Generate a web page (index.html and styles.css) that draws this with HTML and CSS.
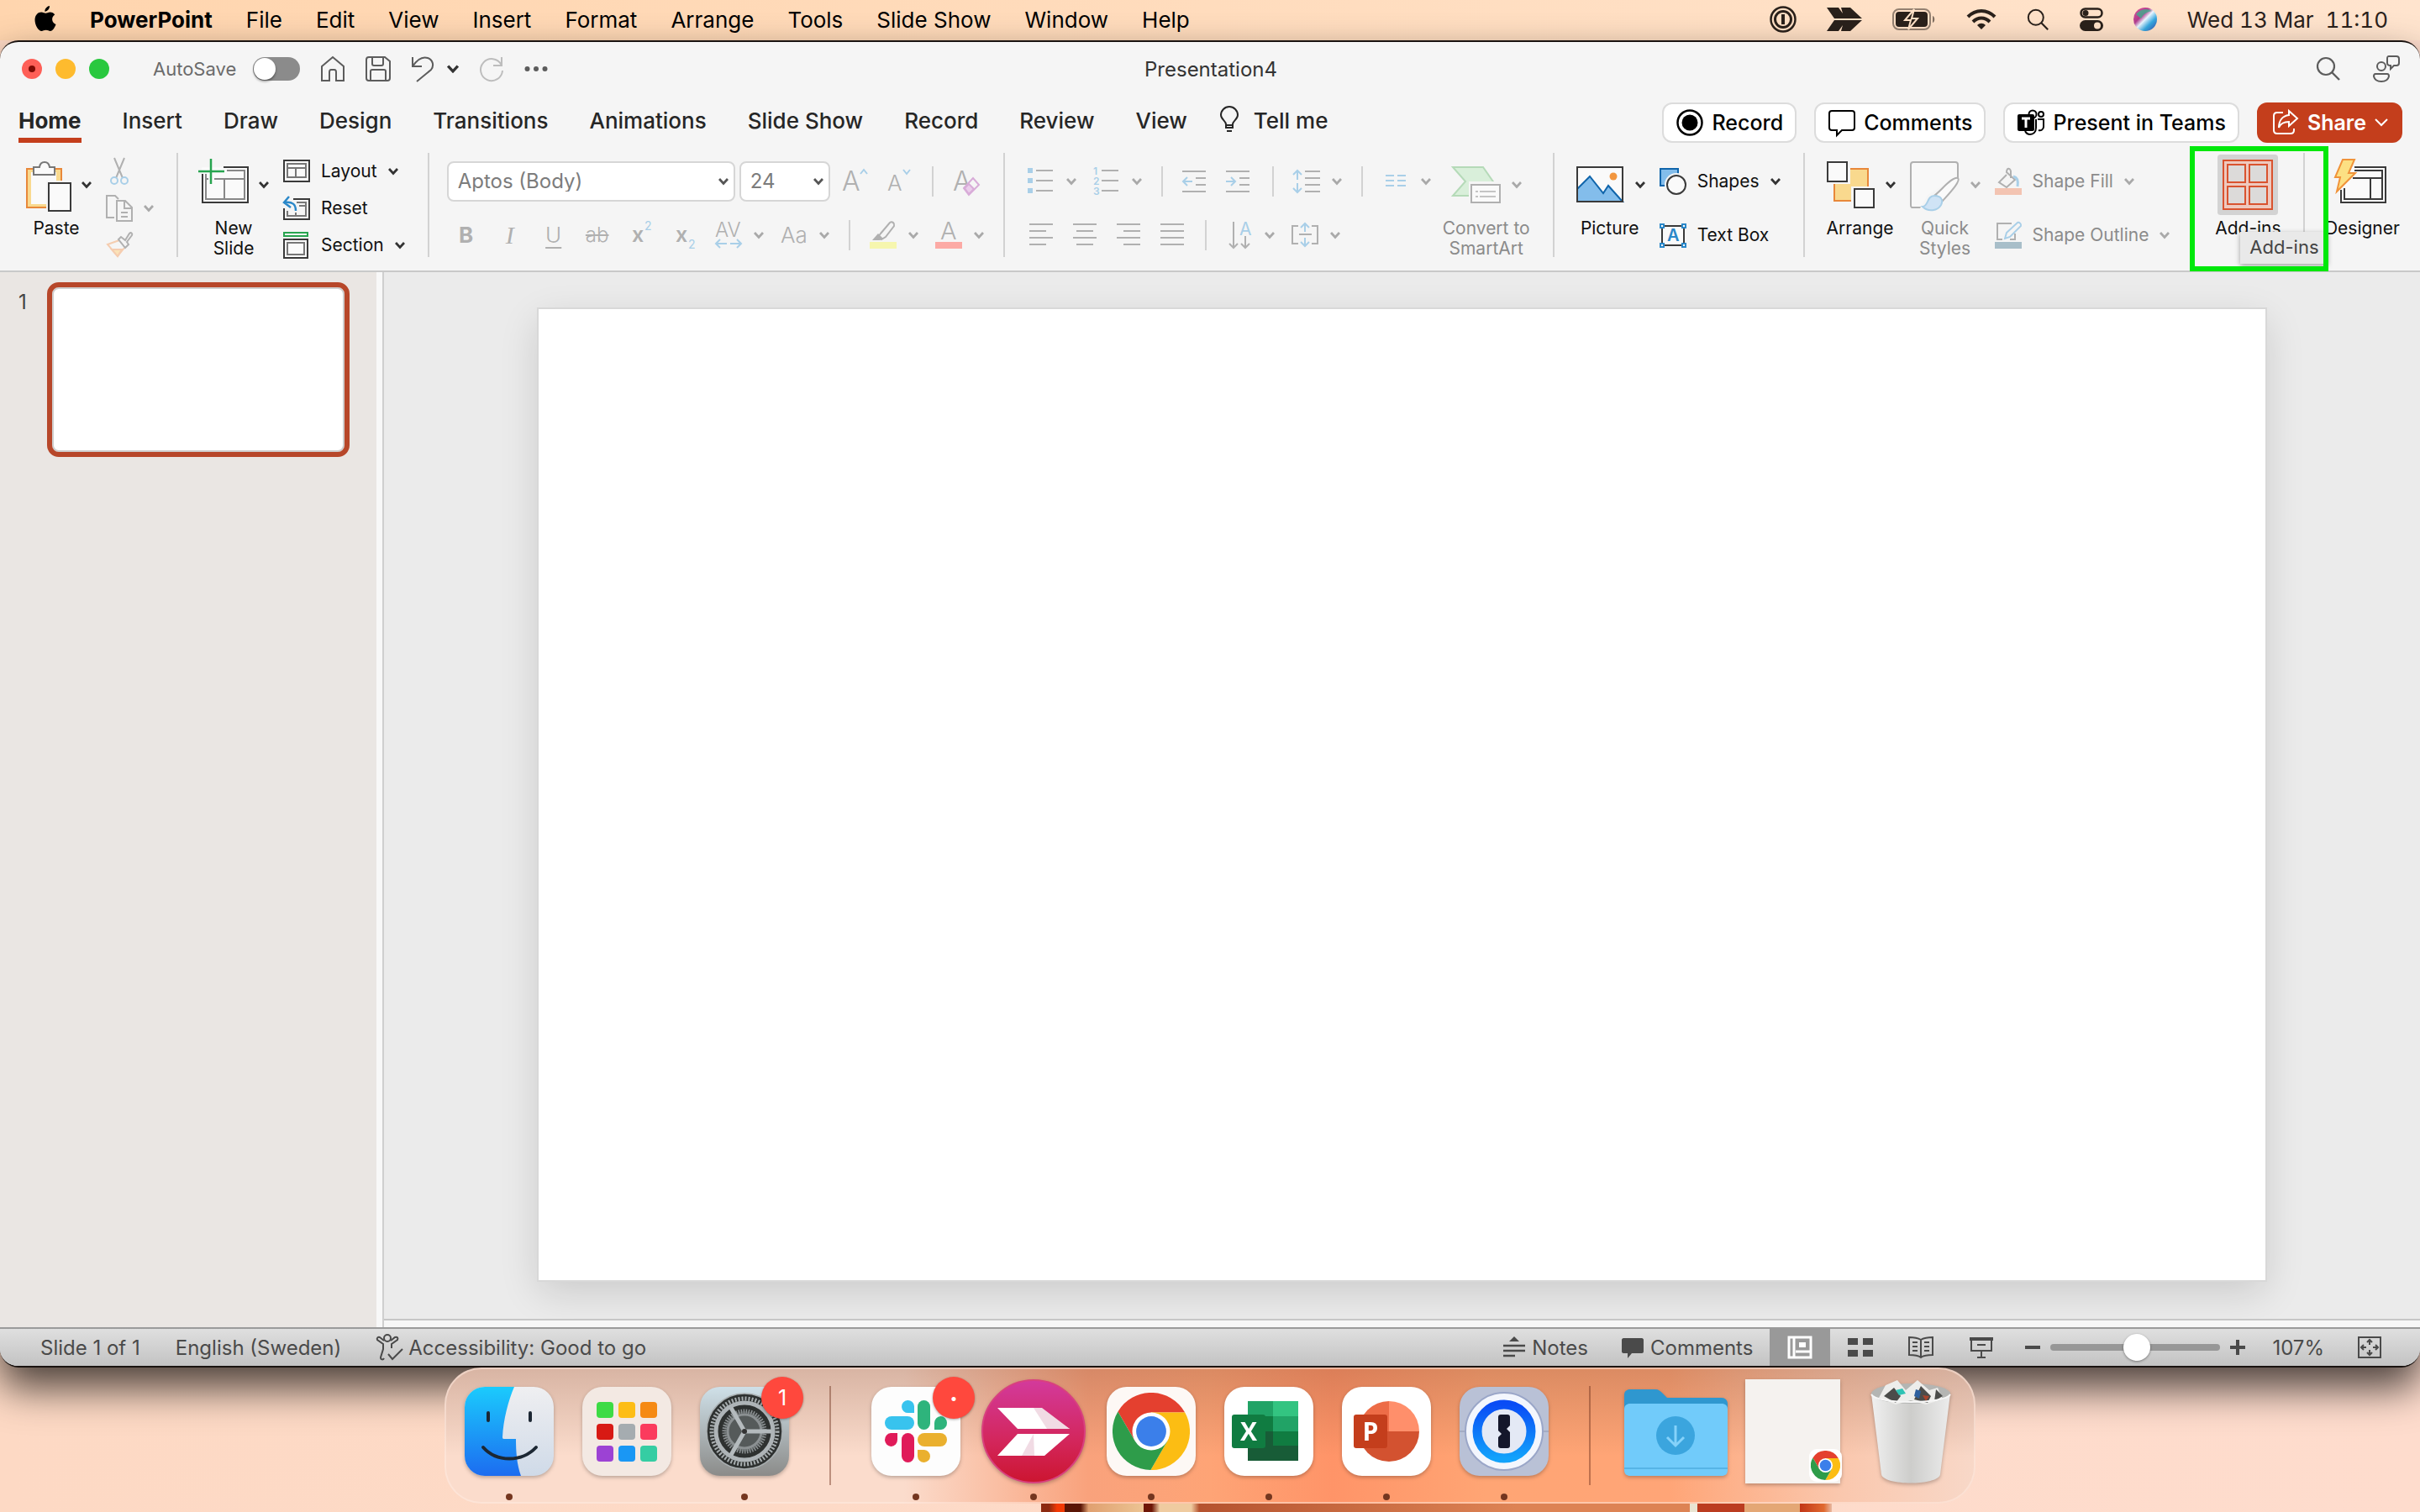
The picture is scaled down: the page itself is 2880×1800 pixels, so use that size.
FILE: index.html
```
<!DOCTYPE html>
<html lang="en">
<head>
    <meta charset="UTF-8">
    <meta name="viewport" content="width=device-width, initial-scale=1.0">
    <title>Presentation4</title>
    <link rel="stylesheet" href="styles.css">
</head>
<body>
    <svg class="sprite" aria-hidden="true">
        <symbol id="chev" viewBox="0 0 12 12"><path d="M1 3l5 5.500 5-5.500" fill="none" stroke="currentColor" stroke-width="2.800"/></symbol>
        <symbol id="search" viewBox="0 0 30 30"><circle cx="12" cy="12" r="10" fill="none" stroke="currentColor" stroke-width="2.200"/><path d="M19 19l9 9" stroke="currentColor" stroke-width="2.400" fill="none"/></symbol>
        <symbol id="chrome" viewBox="-45 -45 90 90">
            <path d="M-38.700-23A45 45 0 0 1 39.300-22H0L-19 11z" fill="#e4402f"/>
            <path d="M39.300-22A45 45 0 0 1-.6 45L19 11 0-22z" fill="#fcbd13"/>
            <path d="M-.6 45A45 45 0 0 1-38.700-23L-19 11H19z" fill="#2e9c4a"/>
            <circle r="22" fill="#fff"/><circle r="17.500" fill="#3b7fea"/>
        </symbol>
    </svg>

    <header class="menubar">
        <nav class="menus">
            <svg class="apple" width="26" height="32" viewBox="0 0 26 32"><path d="M18 0c.3 3-2.300 6.600-5.600 6.700C12 3.600 15 .6 18 0zM13.400 8.800c1.200 0 3-1.400 5.400-1.300 2.300.1 4.300 1.200 5.400 3-4.600 2.900-3.900 9.400 1.300 11.500-1 3-3.600 8-6.600 8-1.900 0-2.800-1.200-5.200-1.200S10.200 30 8.500 30C4.800 30 .5 23 .5 16.800c0-6 3.800-9.300 7.600-9.300 2.400 0 4.100 1.300 5.300 1.300z"/></svg>
            <a href="#" class="app-name">PowerPoint</a>
            <a href="#">File</a>
            <a href="#">Edit</a>
            <a href="#">View</a>
            <a href="#">Insert</a>
            <a href="#">Format</a>
            <a href="#">Arrange</a>
            <a href="#">Tools</a>
            <a href="#">Slide Show</a>
            <a href="#">Window</a>
            <a href="#">Help</a>
        </nav>
        <div class="tray">
            <svg width="32" height="32" viewBox="0 0 32 32" fill="none" stroke="currentColor"><circle cx="16" cy="16" r="14.500" stroke-width="2.500"/><circle cx="16" cy="16" r="9.500" stroke-width="3"/><path d="M16 10v12" stroke-width="4"/></svg>
            <svg width="42" height="28" viewBox="0 0 42 28"><path d="M0 0h14l5 7-2-7h11l14 13H9zM9 15h33L28 28H17l2-7-5 7H0z"/></svg>
            <svg width="52" height="26" viewBox="0 0 52 26"><rect x="1" y="1" width="44" height="24" rx="7" fill="none" stroke="currentColor" stroke-width="2" opacity=".5"/><rect x="4" y="4" width="38" height="18" rx="4"/><path d="M48 9c3 1 3 7 0 8z" opacity=".6"/><path d="M26 1L15 14h7l-3 11 11-13h-7z" stroke="#ffe2c8" stroke-width="2"/></svg>
            <svg width="36" height="26" viewBox="0 0 36 26" fill="none" stroke="currentColor" stroke-width="4"><path d="M2 10c9-9.500 23-9.500 32 0M8 16c6-6 14-6 20 0"/><path d="M18 25l-5-5c3-3 7-3 10 0z" fill="currentColor" stroke="none"/></svg>
            <svg width="27" height="27"><use href="#search"/></svg>
            <svg width="28" height="28" viewBox="0 0 28 28"><rect x="1.500" y="1.500" width="25" height="10" rx="5" fill="none" stroke="currentColor" stroke-width="2.500"/><circle cx="7" cy="6.500" r="3.500"/><rect y="15" width="28" height="13" rx="6.500"/><circle cx="21" cy="21.500" r="4" fill="#ffe2c8"/></svg>
            <svg width="28" height="28" viewBox="0 0 28 28"><defs><linearGradient id="siri" x2="1" y2="1"><stop stop-color="#e05a9a"/><stop offset=".35" stop-color="#b23b8e"/><stop offset=".5" stop-color="#e9f6ff"/><stop offset=".7" stop-color="#35a8e0"/><stop offset="1" stop-color="#3a45a8"/></linearGradient></defs><circle cx="14" cy="14" r="14" fill="url(#siri)"/><path d="M3 8c5-6 12-8 19-4-5 1-10 3-13 9z" fill="#3fae8d" opacity=".8"/></svg>
            <time>Wed 13 Mar&nbsp; 11:10</time>
        </div>
    </header>

    <main class="window">
        <div class="titlebar">
            <div class="quick">
                <div class="lights">
                    <button class="light close" aria-label="Close"></button>
                    <button class="light min" aria-label="Minimize"></button>
                    <button class="light max" aria-label="Zoom"></button>
                </div>
                <label class="autosave">AutoSave <input type="checkbox" class="toggle"></label>
                <button aria-label="Home"><svg width="30" height="32" viewBox="0 0 30 32" class="line"><path d="M2 13L15 2l13 11v17h-9V20c0-2-1-3-2-3h-4c-1 0-2 1-2 3v10H2z"/></svg></button>
                <button aria-label="Save"><svg width="30" height="30" viewBox="0 0 30 30" class="line"><path d="M4 1h19l6 5v20c0 2-1 3-3 3H4c-2 0-3-1-3-3V4c0-2 1-3 3-3zM8 1v8c0 1 1 2 2 2h9c1 0 2-1 2-2V1M6 29V18c0-1 1-2 2-2h14c1 0 2 1 2 2v11"/></svg></button>
                <button class="undo" aria-label="Undo"><svg width="28" height="32" viewBox="0 0 28 32" class="line"><path d="M2 2v11h11M2 13C8 4 14 1 20 3c6 2 8 9 4 14L7 31"/></svg><svg width="14" height="14" class="dark"><use href="#chev"/></svg></button>
                <button class="faded" aria-label="Redo"><svg width="30" height="30" viewBox="0 0 30 30" class="line"><path d="M27 1v10H17M26.500 10A13 13 0 1 0 28 17"/></svg></button>
                <button aria-label="More"><svg width="28" height="8" viewBox="0 0 28 8"><circle cx="3.500" cy="4" r="3"/><circle cx="14" cy="4" r="3"/><circle cx="24.500" cy="4" r="3"/></svg></button>
            </div>
            <h1>Presentation4</h1>
            <div class="corner">
                <button aria-label="Search"><svg width="30" height="30"><use href="#search"/></svg></button>
                <button aria-label="Account"><svg width="32" height="32" viewBox="0 0 32 32" class="line"><circle cx="10" cy="13" r="5"/><path d="M3 22h14c2 0 2 2 2 3-1 4-5 6-9 6s-8-2-9-6c0-1 0-3 2-3zM19 1h9c2 0 3 1 3 3v5c0 2-1 3-3 3h-3l-4 4v-4c-3 0-4-1-4-3V4c0-2 0-3 2-3z"/></svg></button>
            </div>
        </div>

        <div class="tabrow">
            <nav class="tabs">
                <button class="tab active">Home</button>
                <button class="tab">Insert</button>
                <button class="tab">Draw</button>
                <button class="tab">Design</button>
                <button class="tab">Transitions</button>
                <button class="tab">Animations</button>
                <button class="tab">Slide Show</button>
                <button class="tab">Record</button>
                <button class="tab">Review</button>
                <button class="tab">View</button>
                <button class="tab tell"><svg width="22" height="32" viewBox="0 0 22 32" class="line"><path d="M7 21c0-4-6-6-6-11a10 10 0 0 1 20 0c0 5-6 7-6 11v4H7zM7 22h8M8 29h6"/></svg>Tell me</button>
            </nav>
            <div class="actions">
                <button class="pill"><svg width="32" height="32" viewBox="0 0 32 32"><circle cx="16" cy="16" r="14.500" fill="none" stroke="currentColor" stroke-width="2.500"/><circle cx="16" cy="16" r="9.500"/></svg>Record</button>
                <button class="pill"><svg width="32" height="32" viewBox="0 0 32 32" class="line"><path d="M4 2h24c2 0 3 1 3 3v17c0 2-1 3-3 3H16l-6 6v-6H4c-2 0-3-1-3-3V5c0-2 1-3 3-3z"/></svg>Comments</button>
                <button class="pill"><svg width="32" height="32" viewBox="0 0 32 32"><g class="line"><circle cx="18" cy="6" r="4.500"/><circle cx="28" cy="6" r="3"/><path d="M24 12h7v9c0 3-3 5-6 4M22 12v10c0 5-3 8-7 8s-5-2-6-4"/></g><rect y="6" width="20" height="20" rx="2"/><path d="M5 11h10M10 11v11" stroke="#fff" stroke-width="3"/></svg>Present in Teams</button>
                <button class="pill share"><svg width="32" height="32" viewBox="0 0 32 32" class="line"><path d="M13 4H6C3 4 2 6 2 8v17c0 3 1 4 4 4h16c3 0 4-1 4-4v-2M20 2l10 9-10 9v-5c-6 0-10 2-12 7 0-8 4-14 12-15z"/></svg>Share <svg width="16" height="16" viewBox="0 0 16 16" class="line"><path d="M1 4l7 7 7-7"/></svg></button>
            </div>
        </div>

        <div class="ribbon">
            <div class="group">
                <button class="big">
                    <span class="face"><svg width="60" height="64" viewBox="0 0 60 64"><path d="M6 13h42v45H6z" fill="#f9d98e"/><path d="M12 17h30v38H12z" fill="#fafafa"/><path d="M48 28V13H7v46h24" fill="none" stroke="#e8883a" stroke-width="2"/><path d="M15 20v-9h7c1-8 11-8 12 0h6v9z" fill="#fafafa" stroke="#777" stroke-width="2"/><path d="M30 27h32v36H30z" fill="#f5f5f5"/><path d="M33 30h26v33H33z" fill="#fafafa" stroke="#3a3a3a" stroke-width="2"/></svg><svg class="chev"><use href="#chev"/></svg></span>
                    <span>Paste</span>
                </button>
                <div class="stack">
                    <button class="small off" aria-label="Cut"><svg width="32" height="32" viewBox="0 0 32 32" fill="none" stroke-width="2"><path d="M10 0l10 24M22 0L12 24" stroke="#b0b0b0"/><g stroke="#a9cfe8"><circle cx="10" cy="27" r="4"/><circle cx="22" cy="27" r="4"/></g></svg></button>
                    <button class="small off" aria-label="Copy"><svg width="32" height="32" viewBox="0 0 32 32" fill="none" stroke="#b0b0b0" stroke-width="2"><path d="M10 27H1V1h10l4 4M13 7h10l8 8v16H13zM22 7v9h9M18 21h8M18 26h8"/></svg><svg class="chev"><use href="#chev"/></svg></button>
                    <button class="small off" aria-label="Format Painter"><svg width="32" height="32" viewBox="0 0 32 32" fill="none" stroke-width="2"><path d="M16 10L2 15l12 14 8-10" stroke="#f5cdb0"/><path d="M7 21l7 8 5-8z" fill="#fbe3b8" stroke="#f5cdb0"/><path d="M15 9l3-3 5 4 5-8c2-2 4 0 3 2l-6 8 2 3-4 4z" stroke="#b0b0b0"/></svg></button>
                </div>
            </div>
            <span class="divider"></span>
            <div class="group">
                <button class="big">
                    <span class="face"><svg width="60" height="64" viewBox="0 0 60 64" fill="none" stroke-width="2"><path d="M4 11h54v42H5z" fill="#fafafa"/><path d="M30 11h29v42H5V19" stroke="#3a3a3a"/><path d="M34 15h21v34H9V19M19 25h36M9 25h3M31 25v24" stroke="#888"/><path d="M15 1v30M0 16h31" stroke="#27a44f" stroke-width="2.500"/></svg><svg class="chev"><use href="#chev"/></svg></span>
                    <span>New<br>Slide</span>
                </button>
                <div class="stack">
                    <button class="small"><svg width="32" height="32" viewBox="0 0 32 32" fill="none" stroke-width="2"><path d="M1 3h30v25H1z" fill="#fafafa" stroke="#3a3a3a"/><path d="M5 7h22v16H5zM5 12h22M15 12v11" stroke="#777"/></svg>Layout <svg class="chev"><use href="#chev"/></svg></button>
                    <button class="small"><svg width="32" height="32" viewBox="0 0 32 32" fill="none" stroke-width="2"><path d="M12 5h19v24H1V16" stroke="#3a3a3a"/><path d="M16 9h11v16H5v-6M19 13h8M15 21v4" stroke="#777"/><path d="M7 2L1 9l8 6M2 9c9-1 13 2 13 10" stroke="#2b88c9" stroke-width="2.500"/></svg>Reset</button>
                    <button class="small"><svg width="32" height="32" viewBox="0 0 32 32" fill="none" stroke-width="2"><path d="M1 1h28v4H1z" stroke="#27a44f"/><path d="M1 9h28v22H1z" fill="#fafafa" stroke="#3a3a3a"/><path d="M5 13h20v14H5z" stroke="#777"/></svg>Section <svg class="chev"><use href="#chev"/></svg></button>
                </div>
            </div>
            <span class="divider"></span>
            <div class="group font">
                <div class="rows">
                    <div class="row">
                        <div class="combos">
                            <span class="combo font-name"><select aria-label="Font"><option>Aptos (Body)</option></select><svg class="chev"><use href="#chev"/></svg></span>
                            <span class="combo font-size"><select aria-label="Font size"><option>24</option></select><svg class="chev"><use href="#chev"/></svg></span>
                        </div>
                        <button class="tool" aria-label="Increase font size"><svg width="32" height="32" viewBox="0 0 32 32"><text x="0" y="27" class="thin" font-size="32">A</text><path d="M22 7l4-5 4 5" class="blue"/></svg></button>
                        <button class="tool" aria-label="Decrease font size"><svg width="32" height="32" viewBox="0 0 32 32"><text x="2" y="27" class="thin" font-size="26">A</text><path d="M21 2l4 5 4-5" class="blue"/></svg></button>
                        <span class="divider short"></span>
                        <button class="tool" aria-label="Clear formatting"><svg width="32" height="32" viewBox="0 0 32 32"><text x="0" y="27" class="thin" font-size="32">A</text><path d="M13 24L24 12l7 8-12 12z" fill="#f5f5f5" stroke="#d8acd8" stroke-width="2"/><path d="M14 24l5-5 6 6-6 6z" fill="#ebcdeb" stroke="#d8acd8" stroke-width="2"/></svg></button>
                    </div>
                    <div class="row tools">
                        <button class="tool"><b>B</b></button>
                        <button class="tool italic"><i>I</i></button>
                        <button class="tool"><u>U</u></button>
                        <button class="tool strike"><s>ab</s></button>
                        <button class="tool" aria-label="Superscript"><svg width="32" height="32" viewBox="0 0 32 32"><text x="5" y="24" font-size="25" font-weight="600">x</text><text x="20" y="10" font-size="14" class="cyan">2</text></svg></button>
                        <button class="tool" aria-label="Subscript"><svg width="32" height="32" viewBox="0 0 32 32"><text x="5" y="24" font-size="25" font-weight="600">x</text><text x="20" y="32" font-size="14" class="cyan">2</text></svg></button>
                        <button class="tool" aria-label="Character spacing"><svg width="32" height="32" viewBox="0 0 32 32"><text x="0" y="18" class="thin" font-size="24">AV</text><path d="M6 21l-5 5 5 5M1 26h13M26 21l5 5-5 5M31 26H18" class="blue"/></svg><svg class="chev"><use href="#chev"/></svg></button>
                        <button class="tool" aria-label="Change case"><svg width="32" height="32" viewBox="0 0 32 32"><text x="0" y="25" font-size="26" font-weight="300">Aa</text></svg><svg class="chev"><use href="#chev"/></svg></button>
                        <span class="divider short"></span>
                        <button class="tool" aria-label="Highlight"><svg width="32" height="32" viewBox="0 0 32 32"><path d="M13 14L24 1c3-2 6 1 5 4L19 18l-5 3-4-3z" fill="none" stroke="#b0b0b0" stroke-width="2"/><path d="M10 14l6 6-4 2H3z"/><path d="M0 24h32v8H0z" fill="#f6f6ae"/></svg><svg class="chev"><use href="#chev"/></svg></button>
                        <button class="tool" aria-label="Font color"><svg width="32" height="32" viewBox="0 0 32 32"><text x="6" y="21" class="thin" font-size="29">A</text><path d="M0 24h32v8H0z" fill="#fcaaa5"/></svg><svg class="chev"><use href="#chev"/></svg></button>
                    </div>
                </div>
            </div>
            <span class="divider"></span>
            <div class="group para">
                <div class="rows">
                    <div class="row">
                        <button class="tool" aria-label="Bullets"><svg width="32" height="32" viewBox="0 0 32 32"><path d="M0 0h6v6H0zM0 12h6v6H0zM0 24h6v6H0z" fill="#a9cfe8"/><path d="M10 3h20M10 15h20M10 27h20" class="gray"/></svg><svg class="chev"><use href="#chev"/></svg></button>
                        <button class="tool" aria-label="Numbering"><svg width="32" height="32" viewBox="0 0 32 32"><g class="cyan" font-size="12" font-weight="600"><text x="0" y="8">1</text><text x="0" y="20">2</text><text x="0" y="32">3</text></g><path d="M10 3h20M10 15h20M10 27h20" class="gray"/></svg><svg class="chev"><use href="#chev"/></svg></button>
                        <span class="divider short"></span>
                        <button class="tool" aria-label="Decrease indent"><svg width="32" height="32" viewBox="0 0 32 32"><path d="M0 4h28M16 12h12M16 20h12M0 28h28" class="gray"/><path d="M12 16H1M6 11l-5 5 5 5" class="blue"/></svg></button>
                        <button class="tool" aria-label="Increase indent"><svg width="32" height="32" viewBox="0 0 32 32"><path d="M0 4h28M16 12h12M16 20h12M0 28h28" class="gray"/><path d="M0 16h11M6 11l5 5-5 5" class="blue"/></svg></button>
                        <span class="divider short"></span>
                        <button class="tool" aria-label="Line spacing"><svg width="32" height="32" viewBox="0 0 32 32"><path d="M14 4h18M14 12h18M14 20h18M14 28h18" class="gray"/><path d="M0 8l5-5 5 5M5 3v11M0 24l5 5 5-5M5 29V18" class="blue"/></svg><svg class="chev"><use href="#chev"/></svg></button>
                        <span class="divider short"></span>
                        <button class="tool" aria-label="Columns"><svg width="32" height="32" viewBox="0 0 32 32"><path d="M4 9h10M4 15h10M4 21h10M18 9h10M18 15h10M18 21h10" class="blue"/></svg><svg class="chev"><use href="#chev"/></svg></button>
                    </div>
                    <div class="row">
                        <button class="tool" aria-label="Align left"><svg width="32" height="32" viewBox="0 0 32 32"><path d="M2 3h28M2 11h20M2 19h28M2 27h20" class="gray"/></svg></button>
                        <button class="tool" aria-label="Center"><svg width="32" height="32" viewBox="0 0 32 32"><path d="M2 3h28M6 11h20M2 19h28M6 27h20" class="gray"/></svg></button>
                        <button class="tool" aria-label="Align right"><svg width="32" height="32" viewBox="0 0 32 32"><path d="M2 3h28M10 11h20M2 19h28M10 27h20" class="gray"/></svg></button>
                        <button class="tool" aria-label="Justify"><svg width="32" height="32" viewBox="0 0 32 32"><path d="M2 3h28M2 11h28M2 19h28M2 27h28" class="gray"/></svg></button>
                        <span class="divider short"></span>
                        <button class="tool" aria-label="Text direction"><svg width="32" height="32" viewBox="0 0 32 32"><path d="M9 0v31M4 26l5 5 5-5M23 17v14M18 26l5 5 5-5" class="gray"/><text x="16" y="16" font-size="21" class="cyan">A</text></svg><svg class="chev"><use href="#chev"/></svg></button>
                        <button class="tool" aria-label="Align text"><svg width="32" height="32" viewBox="0 0 32 32"><path d="M8 5H1v21h7M24 5h7v21h-7M9 15h15" class="gray"/><path d="M11 7l5-5 5 5M16 2v10M11 24l5 5 5-5M16 29V19" class="blue"/></svg><svg class="chev"><use href="#chev"/></svg></button>
                    </div>
                </div>
                <button class="big off">
                    <span class="face"><svg width="60" height="64" viewBox="0 0 60 64" stroke-width="2"><path d="M2 11h36l16 23-15 11H2l15-17z" fill="#d9efda" stroke="#b5dab8"/><path d="M21 28h39v30H21z" fill="#f5f5f5"/><path d="M24 32h34v21H24z" fill="#fafafa" stroke="#b0b0b0"/><path d="M29 40h3M34 40h19M29 46h3M34 46h19" stroke="#c4c4c4"/></svg><svg class="chev"><use href="#chev"/></svg></span>
                    <span>Convert to<br>SmartArt</span>
                </button>
            </div>
            <span class="divider"></span>
            <div class="group">
                <button class="big">
                    <span class="face"><svg width="60" height="64" viewBox="0 0 60 64" stroke-width="2"><path d="M3 11h54v41H3z" fill="#fafafa"/><path d="M3 37l15-15 16 20 6-9 17 19H3z" fill="#83bdeb" stroke="#1065ab"/><circle cx="46" cy="22" r="4.500" fill="#f2963f"/><path d="M3 11h54v41H3z" fill="none" stroke="#3a3a3a"/></svg><svg class="chev"><use href="#chev"/></svg></span>
                    <span>Picture</span>
                </button>
                <div class="rows">
                    <button class="small"><svg width="32" height="32" viewBox="0 0 32 32" stroke-width="2"><path d="M1 1h21v20H1z" fill="#83bdeb" stroke="#1065ab"/><circle cx="20" cy="20" r="14" fill="#f5f5f5"/><circle cx="20" cy="20" r="11" fill="#fafafa" stroke="#3a3a3a"/></svg>Shapes <svg class="chev"><use href="#chev"/></svg></button>
                    <button class="small"><svg width="32" height="32" viewBox="0 0 32 32" stroke-width="2"><path d="M3 5h26v23H3z" fill="#fafafa" stroke="#3a3a3a"/><g fill="#fff" stroke="#2b88c9"><path d="M1 3h4v4H1zM27 3h4v4h-4zM1 26h4v4H1zM27 26h4v4h-4z"/></g><text x="9" y="23" font-size="20" fill="#2b88c9" font-weight="600">A</text></svg>Text Box</button>
                </div>
            </div>
            <span class="divider"></span>
            <div class="group format">
                <button class="big">
                    <span class="face"><svg width="60" height="64" viewBox="0 0 60 64" stroke-width="2"><path d="M11 13h40v38H11z" fill="#f9d98e" stroke="#e8883a"/><path d="M0 3h30v28H0zM31 34h30v30H31z" fill="#f5f5f5"/><path d="M3 5h23v23H3zM35 37h23v22H35z" fill="#fafafa" stroke="#3a3a3a"/></svg><svg class="chev"><use href="#chev"/></svg></span>
                    <span>Arrange</span>
                </button>
                <button class="big off">
                    <span class="face"><svg width="60" height="64" viewBox="0 0 60 64" stroke-width="2"><path d="M4 5h50c2 0 3 1 3 3v50c0 2-1 1-3 1H4c-2 0-3 0-3-3V8c0-2 1-3 3-3z" fill="#f8f8f8" stroke="#b0b0b0"/><path d="M12 60l9-16 33-20h8v40H12z" fill="#f5f5f5"/><path d="M30 44c8-6 20-22 27-20 4 3-9 17-18 27z" fill="#fafafa" stroke="#b0b0b0"/><path d="M15 58c7 0 5-13 14-13 8 0 11 5 8 11-4 7-15 9-22 2z" fill="#cfe3f5" stroke="#a9cfe8"/></svg><svg class="chev"><use href="#chev"/></svg></span>
                    <span>Quick<br>Styles</span>
                </button>
                <div class="rows">
                    <button class="small off"><svg width="32" height="32" viewBox="0 0 32 32" fill="none" stroke-width="2"><path d="M14 8L5 17l9 6 10-9-10-9c0-5 4-6 5-1v8" stroke="#b0b0b0"/><path d="M22 10c5 1 6 6 5 12" stroke="#a9cfe8" stroke-width="3"/><path d="M0 24h32v8H0z" fill="#f3c4b2"/></svg>Shape Fill <svg class="chev"><use href="#chev"/></svg></button>
                    <button class="small off"><svg width="32" height="32" viewBox="0 0 32 32" fill="none" stroke-width="2"><path d="M20 2H3v19h6M24 14v7h-6" stroke="#b0b0b0"/><path d="M12 20l2-7L27 1c2-1 5 2 4 4L18 18z" stroke="#a9cfe8"/><path d="M0 24h32v8H0z" fill="#a8bec9"/></svg>Shape Outline <svg class="chev"><use href="#chev"/></svg></button>
                </div>
            </div>
            <div class="addins">
                <button class="big">
                    <span class="face tile"><svg width="60" height="60" viewBox="0 0 60 60" fill="none" stroke="#d9532f" stroke-width="2"><path d="M1 1h58v58H1z" fill="#efc9be"/><path d="M6 6h21v21H6zM32 6h21v21H32zM6 32h21v21H6zM32 32h21v21H32z" fill="#dcdad9"/></svg></span>
                    <span>Add-ins</span>
                </button>
                <span class="divider"></span>
                <span class="tooltip">Add-ins</span>
                <span class="marker"></span>
            </div>
            <button class="big designer">
                <span class="face"><svg width="66" height="64" viewBox="0 0 66 64" fill="none" stroke-width="2"><path d="M15 11h46v42H6V30z" fill="#fafafa"/><path d="M24 11h37v42H8V38" stroke="#3a3a3a"/><path d="M24 15h33v34H12V36M22 24h35M43 24v25" stroke="#3a3a3a"/><path d="M10 2h14l-7 16h8L3 40l4-17H1z" fill="#fce083" stroke="#f0933a"/></svg></span>
                <span>Designer</span>
            </button>
        </div>

        <div class="workspace">
            <aside class="slides">
                <span class="slide-number">1</span>
                <button class="thumb" aria-label="Slide 1"></button>
            </aside>
            <div class="editor">
                <section class="canvas"><div class="slide"></div></section>
                <div class="notes-handle"></div>
            </div>
        </div>

        <footer class="status">
            <div class="info">
                <span>Slide 1 of 1</span>
                <span>English (Sweden)</span>
                <button class="access"><svg width="32" height="32" viewBox="0 0 32 32" class="line"><circle cx="13" cy="5" r="4"/><path d="M9 8L4 4C2 3 0 5 1 7l7 5v6L5 28c0 3 3 3 4 1M17 8l5-4c3-1 4 1 3 3l-7 5v5M14 24l5 6L31 18"/></svg>Accessibility: Good to go</button>
            </div>
            <div class="views">
                <button class="notes"><svg width="26" height="26" viewBox="0 0 26 26"><path d="M13 0l6 6H7z"/><path d="M0 11h26M0 17h26M0 23h14" stroke="currentColor" stroke-width="2.500"/></svg>Notes</button>
                <button class="comments"><svg width="26" height="26" viewBox="0 0 26 26"><path d="M2 2h22c1 0 2 1 2 2v14c0 1-1 2-2 2H12l-5 6v-6H2c-1 0-2-1-2-2V4c0-1 1-2 2-2z"/></svg>Comments</button>
                <button class="view current" aria-label="Normal"><svg width="30" height="28" viewBox="0 0 30 28" fill="none" stroke="#fff" stroke-width="3"><path d="M2 2h26v24H2zM8 2v24M10 19h18"/><path d="M14 8h8v6h-8z" fill="#fff" stroke="none"/></svg></button>
                <button class="view" aria-label="Slide sorter"><svg width="30" height="24" viewBox="0 0 30 24"><path d="M0 1h12v8H0zM18 1h12v8H18zM0 15h12v8H0zM18 15h12v8H18z"/></svg></button>
                <button class="view" aria-label="Reading view"><svg width="30" height="26" viewBox="0 0 30 26" class="line"><path d="M15 4C10 1 6 1 1 1v21c5 0 10 0 14 3 4-3 9-3 14-3V1c-5 0-9 0-14 3zv20M5 7h6M5 12h6M5 17h6M19 7h6M19 12h6M19 17h6"/></svg></button>
                <button class="view" aria-label="Slide show"><svg width="30" height="26" viewBox="0 0 30 26" class="line"><path d="M1 3h28" stroke-width="4"/><path d="M3 4v13h24V4M10 10h10M15 17v8M10 25h10"/></svg></button>
                <div class="zoom">
                    <button aria-label="Zoom out"><svg width="18" height="18" viewBox="0 0 18 18"><path d="M0 7h18v4H0z"/></svg></button>
                    <input type="range" min="0" max="100" value="51" aria-label="Zoom">
                    <button aria-label="Zoom in"><svg width="18" height="18" viewBox="0 0 18 18"><path d="M0 7h7V0h4v7h7v4h-7v7H7v-7H0z"/></svg></button>
                </div>
                <button class="percent">107%</button>
                <button aria-label="Fit slide"><svg width="28" height="28" viewBox="0 0 28 28" class="line"><path d="M1 2h26v24H1zM14 5v6M11 8l3-3 3 3M14 23v-6M11 20l3 3 3-3M4 14h6M7 11l-3 3 3 3M24 14h-6M21 11l3 3-3 3"/></svg></button>
            </div>
        </footer>
    </main>

    <div class="dock-area">
        <div class="dock">
            <button class="app running" aria-label="Finder"><svg width="106" height="106" viewBox="0 0 106 106"><defs><linearGradient id="finder" x2="0" y2="1"><stop stop-color="#1bcbfd"/><stop offset="1" stop-color="#1c6cf0"/></linearGradient><linearGradient id="face" x2="0" y2="1"><stop stop-color="#efeff1"/><stop offset="1" stop-color="#cfdae8"/></linearGradient><clipPath id="tile"><rect width="106" height="106" rx="24"/></clipPath></defs><g clip-path="url(#tile)"><path d="M0 0h106v106H0z" fill="url(#face)"/><path d="M0 0h59c-7 16-13 39-14 60 0 2 1 2 3 2h13c0 15 1 30 6 44H0z" fill="url(#finder)"/></g><path d="M28 31v9M78 31v9M22 72c16 18 46 18 63 0" fill="none" stroke="#1c2733" stroke-width="4" stroke-linecap="round"/></svg></button>
            <button class="app" aria-label="Launchpad"><svg width="106" height="106" viewBox="0 0 106 106"><rect width="106" height="106" rx="24" fill="#f3e9e3"/><rect x="17" y="18" width="20" height="19" rx="4" fill="#3ddb45"/><rect x="43" y="18" width="20" height="19" rx="4" fill="#fdbd16"/><rect x="69" y="18" width="20" height="19" rx="4" fill="#f58a14"/><rect x="17" y="44" width="20" height="19" rx="4" fill="#d81a14"/><rect x="43" y="44" width="20" height="19" rx="4" fill="#a5acb0"/><rect x="69" y="44" width="20" height="19" rx="4" fill="#fb3b5d"/><rect x="17" y="70" width="20" height="19" rx="4" fill="#9c42d4"/><rect x="43" y="70" width="20" height="19" rx="4" fill="#1a97f4"/><rect x="69" y="70" width="20" height="19" rx="4" fill="#35cda3"/></svg></button>
            <button class="app running" aria-label="System Settings"><svg width="106" height="106" viewBox="0 0 106 106" fill="none"><defs><linearGradient id="metal" x2="0" y2="1"><stop stop-color="#cfe0e8"/><stop offset="1" stop-color="#8b8b89"/></linearGradient></defs><rect width="106" height="106" rx="24" fill="url(#metal)"/><circle cx="53" cy="53" r="45" fill="#2e3130" stroke="#a9afb1" stroke-width="1.500"/><circle cx="53" cy="53" r="39" stroke="#a7adaf" stroke-width="5" stroke-dasharray="2 2"/><circle cx="53" cy="53" r="34" stroke="#aeb4b7" stroke-width="5"/><circle cx="53" cy="53" r="24" fill="#555a5a" stroke="#8b9092" stroke-width="5" stroke-dasharray="1.500 1.500"/><circle cx="53" cy="53" r="20" stroke="#8b9092" stroke-width="3"/><path d="M53 53h32M53 53L37 25M53 53L37 81" stroke="#b4babd" stroke-width="5"/><circle cx="53" cy="53" r="3" fill="#333"/></svg><span class="badge">1</span></button>
            <span class="dock-divider"></span>
            <button class="app running" aria-label="Slack"><svg width="106" height="106" viewBox="0 0 106 106"><rect width="106" height="106" rx="24" fill="#fdfdfd"/><g fill="#38c3ee"><path d="M51 31h-7a7.500 7.500 0 1 1 7-8z"/><rect x="16" y="35" width="35" height="16" rx="8"/></g><g fill="#2eb47c"><rect x="55" y="16" width="15" height="35" rx="7.500"/><path d="M75 51v-8a7.500 8 0 1 1 8 8z"/></g><g fill="#e01b59"><path d="M31 55v8a7.500 8 0 1 1-8-8z"/><rect x="36" y="55" width="15" height="35" rx="7.500"/></g><g fill="#eab02e"><rect x="55" y="55" width="35" height="16" rx="8"/><path d="M55 75h8a7.500 7.500 0 1 1-8 8z"/></g></svg><span class="badge dot">•</span></button>
            <button class="app running" aria-label="Skitch"><svg width="124" height="124" viewBox="0 0 124 124"><defs><linearGradient id="pink" x2="0" y2="1"><stop stop-color="#d33a9c"/><stop offset=".6" stop-color="#d3265b"/><stop offset="1" stop-color="#cc1530"/></linearGradient></defs><circle cx="62" cy="62" r="61" fill="url(#pink)" stroke="#d9407f" stroke-width="2"/><path d="M19 34h44l42 25H43zM43 65h62L75 91H19z" fill="#fff"/><path d="M62 34h10l33 25H78zM62 65l-14 26h15z" fill="#f1dbe4"/></svg></button>
            <button class="app running" aria-label="Chrome"><svg width="106" height="106" viewBox="0 0 106 106"><rect width="106" height="106" rx="24" fill="#fdf8f5"/><use href="#chrome" x="7" y="7" width="92" height="92"/></svg></button>
            <button class="app running" aria-label="Excel"><svg width="106" height="106" viewBox="0 0 106 106"><rect width="106" height="106" rx="24" fill="#fff"/><path d="M28 17h30v18H28z" fill="#21a366"/><path d="M58 17h30v18H58z" fill="#33c481"/><path d="M28 35h30v18H28z" fill="#107c41"/><path d="M58 35h30v18H58z" fill="#21a366"/><path d="M28 53h60v35H28z" fill="#185c37"/><path d="M58 53h30v17H58z" fill="#107c41"/><rect x="9" y="33" width="40" height="40" rx="3" fill="#107c41"/><text x="29" y="64" text-anchor="middle" font-size="30" font-weight="700" fill="#fff">X</text></svg></button>
            <button class="app running" aria-label="PowerPoint"><svg width="106" height="106" viewBox="0 0 106 106"><rect width="106" height="106" rx="24" fill="#fff"/><path d="M56 17a36 36 0 0 0-36 36h36z" fill="#ed6c47"/><path d="M56 17a36 36 0 0 1 36 36H56z" fill="#ff8f6b"/><path d="M20 53a36 36 0 0 0 72 0z" fill="#d35230"/><rect x="14" y="33" width="40" height="40" rx="3" fill="#c43e1c"/><text x="34" y="64" text-anchor="middle" font-size="30" font-weight="700" fill="#fff">P</text></svg></button>
            <button class="app running" aria-label="1Password"><svg width="106" height="106" viewBox="0 0 106 106"><defs><linearGradient id="ring" x2="0" y2="1"><stop stop-color="#0a4cf5"/><stop offset="1" stop-color="#12a2fb"/></linearGradient></defs><rect width="106" height="106" rx="24" fill="#b9c1d6"/><path d="M0 53h106" stroke="#8f97b0"/><circle cx="53" cy="53" r="46" fill="#f3f6fd" stroke="#9aa6c8" stroke-width="2"/><circle cx="53" cy="53" r="32" fill="#e4e9f5" stroke="url(#ring)" stroke-width="11"/><path d="M49 33h8c2 0 3 1 3 3v10l-4 4 4 4v16c0 2-1 3-3 3h-8c-2 0-3-1-3-3V60l4-4-4-4V36c0-2 1-3 3-3z" fill="#14172b"/></svg></button>
            <span class="dock-divider"></span>
            <button class="app" aria-label="Downloads"><svg width="124" height="124" viewBox="0 0 124 124"><path d="M1 19c0-5 3-7 7-7h30c4 0 6 2 9 5l5 5h65c4 0 7 3 7 7v30H1z" fill="#2f97cf"/><path d="M1 36c0-5 3-7 7-7h109c4 0 7 2 7 7v72c0 5-3 7-7 7H8c-4 0-7-2-7-7z" fill="#71cbfa"/><path d="M1 106h123" stroke="#56b4e6" stroke-width="2"/><circle cx="62" cy="67" r="23" fill="#3ba5de"/><path d="M62 55v23M52 69l10 10 10-10" fill="none" stroke="#85d2fa" stroke-width="3"/></svg></button>
            <button class="app" aria-label="Minimized window"><svg width="124" height="124" viewBox="0 0 124 124"><path d="M5 0h113v124H5z" fill="#f5f2ef"/><rect x="81" y="83" width="39" height="39" rx="9" fill="#fff"/><use href="#chrome" x="83" y="85" width="35" height="35"/></svg></button>
            <button class="app" aria-label="Trash"><svg width="124" height="124" viewBox="0 0 124 124"><defs><linearGradient id="bin"><stop stop-color="#f0f0f0"/><stop offset=".5" stop-color="#cdcdcb"/><stop offset="1" stop-color="#ececec"/></linearGradient></defs><path d="M15 17h94l-12 96c-2 14-68 14-70 0z" fill="url(#bin)"/><ellipse cx="62" cy="17" rx="47" ry="12" fill="#b4b5b3"/><path d="M24 22l8-15 14-6 10 12 14-12 14 12 10-3 6 14-20 6-18-5-18 5z" fill="#ededeb"/><path d="M30 20l12-10 8 10-6 8zM66 24l8-16 12 12-4 8zM92 12l8 8-10 6z" fill="#4b4c4a"/><path d="M44 13l8-2 4 6-8 2z" fill="#2fc3b4"/><path d="M68 12l6 2-2 9-6-3z" fill="#2d5f9e"/><path d="M76 19l8 1-4 6z" fill="#a8442c"/><path d="M15 18c6 12 88 12 94 0" fill="none" stroke="#f6f6f6" stroke-width="2"/></svg></button>
        </div>
    </div>
</body>
</html>
```
FILE: styles.css
```
* {
    box-sizing: border-box;
}
body {
    display: flex;
    flex-direction: column;
    height: 100vh;
    margin: 0;
    overflow: hidden;
    background: linear-gradient(to right, #fdd9c4, #fedccd);
    font-family: Inter, "Liberation Sans", sans-serif;
    color: #222;
}
button {
    display: flex;
    align-items: center;
    padding: 0;
    border: none;
    background: none;
    font: inherit;
    color: inherit;
    white-space: nowrap;
}
svg {
    display: block;
    flex: none;
    overflow: visible;
}
svg:not([fill]) {
    fill: currentColor;
}
.sprite {
    position: absolute;
    width: 0;
    height: 0;
}
svg.line,
.line {
    fill: none;
    stroke: currentColor;
    stroke-width: 2;
}
.chev {
    width: 12px;
    height: 12px;
}

/* menu bar */
.menubar {
    display: flex;
    justify-content: space-between;
    align-items: center;
    height: 48px;
    padding: 0 38px 2px 41px;
    background: linear-gradient(to right, #ffd5ae, #ffdcbd 50%, #ffe4ce);
    font-size: 26px;
    color: #000;
}
.menus {
    display: flex;
    align-items: center;
    gap: 40px;
}
.menus a {
    color: inherit;
    text-decoration: none;
}
.menus .app-name {
    font-weight: 700;
}
.tray {
    display: flex;
    align-items: center;
    gap: 36px;
    color: #2a211b;
}
.tray time {
    font-variant-numeric: tabular-nums;
}

/* window */
.window {
    display: flex;
    flex-direction: column;
    flex: 1;
    min-height: 0;
    border-top: 2px solid #1a1310;
    border-bottom: 2px solid #1a1310;
    border-radius: 22px;
    overflow: hidden;
    background: #f5f5f5;
    box-shadow: 0 24px 48px rgba(0, 0, 0, 0.7);
}
.titlebar {
    display: grid;
    grid-template-columns: 1fr auto 1fr;
    align-items: center;
    height: 64px;
    padding: 0 24px 0 26px;
    color: #5c5c5c;
}
.titlebar h1 {
    margin: 0;
    font-size: 24px;
    font-weight: 400;
    color: #333;
}
.quick {
    display: flex;
    align-items: center;
    gap: 24px;
}
.lights {
    display: flex;
    gap: 16px;
    margin-right: 28px;
}
.light {
    justify-content: center;
    width: 24px;
    height: 24px;
    border-radius: 50%;
    background: #febb2e;
}
.light.close {
    background: #fe5f57;
}
.light.close::after {
    content: "";
    width: 8px;
    height: 8px;
    border-radius: 50%;
    background: #7d0b05;
}
.light.max {
    background: #29c83f;
}
.autosave {
    display: flex;
    align-items: center;
    gap: 20px;
    font-size: 22px;
    color: #6b6b6b;
}
.toggle {
    appearance: none;
    width: 56px;
    height: 28px;
    margin: 0;
    border-radius: 14px;
    background: #8b8b8b;
}
.toggle::before {
    content: "";
    display: block;
    width: 26px;
    height: 26px;
    margin: 1px;
    border-radius: 50%;
    background: #fff;
    box-shadow: 0 2px 3px rgba(0, 0, 0, 0.4);
}
.undo {
    gap: 15px;
}
.dark {
    color: #333;
}
.faded {
    color: #bdbdbd;
}
.corner {
    display: flex;
    justify-content: flex-end;
    gap: 38px;
}

/* tabs */
.tabrow {
    display: flex;
    justify-content: space-between;
    align-items: center;
    height: 64px;
    padding: 0 21px 0 22px;
}
.tabs {
    display: flex;
    gap: 49px;
}
.tab {
    height: 48px;
    border-bottom: 6px solid transparent;
    font-size: 26px;
    font-weight: 500;
    color: #262626;
}
.tab.active {
    font-weight: 700;
    border-image: linear-gradient(#c43e1c, #c43e1c) 1;
}
.tell {
    gap: 18px;
    margin-left: -10px;
}
.actions {
    display: flex;
    gap: 21px;
}
.pill {
    gap: 10px;
    height: 48px;
    padding: 0 14px 0 15px;
    border: 2px solid #dcdcdc;
    border-radius: 12px;
    background: #fff;
    font-size: 25px;
    font-weight: 500;
    color: #000;
}
.share {
    padding: 0 15px 0 16px;
    border-color: #c43e1c;
    background: #c43e1c;
    font-weight: 600;
    color: #fff;
}

/* ribbon */
.ribbon {
    display: flex;
    height: 146px;
    padding: 4px 0 0 1px;
    border-bottom: 2px solid #c9c9c9;
    font-size: 21px;
    line-height: 24px;
    color: #111;
}
.group {
    display: flex;
    flex: none;
    gap: 17px;
    padding: 0 27px 0 24px;
}
.font {
    padding-right: 23px;
}
.para {
    gap: 24px;
    padding-right: 37px;
    padding-left: 27px;
}
.format {
    padding-right: 0;
}
.divider {
    flex: none;
    width: 2px;
    height: 124px;
    background: #d2d2d2;
}
.divider.short {
    height: 36px;
    margin: 0 3px;
}
.big {
    flex: none;
    flex-direction: column;
    gap: 8px;
    width: 84px;
    height: 124px;
    padding-top: 6px;
}
.face {
    display: flex;
    flex: none;
    align-items: center;
    gap: 12px;
    height: 64px;
}
.chev {
    color: #333;
}
.off {
    color: #8b8b8b;
}
.off .chev,
.tool .chev {
    color: #a9a9a9;
}
.stack {
    display: flex;
    flex-direction: column;
}
.small {
    gap: 13px;
    height: 44px;
}
.rows {
    display: flex;
    flex-direction: column;
    gap: 16px;
    padding-top: 10px;
}
.rows .small,
.row {
    height: 48px;
}
.row {
    display: flex;
    align-items: center;
    gap: 20px;
}
.tools {
    padding-left: 4px;
}
.combos {
    display: flex;
    gap: 5px;
    margin: 0 -6px 0 -3px;
}
.combo {
    position: relative;
}
.combo select {
    appearance: none;
    width: 100%;
    height: 48px;
    padding: 0 11px;
    border: 2px solid #d6d6d6;
    border-radius: 8px;
    background: #fff;
    font: inherit;
    font-size: 24px;
    color: #7c7c7c;
    opacity: 1;
}
.combo .chev {
    position: absolute;
    top: 18px;
    right: 8px;
    color: #555;
}
.font-name {
    width: 343px;
}
.font-size {
    width: 108px;
}
.tool {
    gap: 14px;
    justify-content: center;
    min-width: 32px;
    height: 36px;
    font-size: 26px;
    color: #b0b0b0;
}
.tool text {
    font-family: Inter, "Liberation Sans", sans-serif;
}
.tool u {
    font-weight: 300;
    text-underline-offset: 5px;
}
.italic {
    font-family: "Liberation Serif", serif;
    font-size: 30px;
}
.strike {
    font-size: 24px;
    font-weight: 300;
}
.thin {
    font-weight: 300;
}
.cyan {
    fill: #a9cfe8;
}
.blue {
    fill: none;
    stroke: #a9cfe8;
    stroke-width: 2;
}
.gray {
    fill: none;
    stroke: #b0b0b0;
    stroke-width: 2;
}
.addins {
    position: relative;
    z-index: 1;
    display: flex;
    flex: none;
    gap: 24px;
    margin-left: 51px;
}
.tile svg {
    border-radius: 1px;
    box-shadow: 0 0 0 6px #d3d3d3;
}
.tooltip {
    position: absolute;
    top: 94px;
    left: 33px;
    width: 104px;
    height: 38px;
    background: #e9e9e9;
    box-shadow: 0 2px 6px rgba(0, 0, 0, 0.35);
    font-size: 22px;
    line-height: 36px;
    text-align: center;
    color: #444;
}
.marker {
    position: absolute;
    top: -8px;
    left: -27px;
    width: 165px;
    height: 149px;
    border: 6px solid #00e80b;
}
.designer {
    margin-left: 26px;
}

/* workspace */
.workspace {
    display: flex;
    flex: 1;
    min-height: 0;
}
.slides {
    display: flex;
    align-items: flex-start;
    gap: 24px;
    width: 457px;
    padding: 12px 39px 0 22px;
    border-right: 2px solid #cfcfcf;
    background: linear-gradient(to left, #f8f8f8 7px, #eae6e3 7px);
}
.slide-number {
    padding-top: 10px;
    font-size: 24px;
    line-height: 28px;
    color: #444;
}
.thumb {
    flex: 1;
    height: 208px;
    border: 6px solid #b7472a;
    border-radius: 14px;
    background: #fff;
    box-shadow: inset 0 0 0 2px #cfcfcf;
}
.editor {
    display: flex;
    flex: 1;
    flex-direction: column;
}
.canvas {
    display: flex;
    flex: 1;
    justify-content: center;
    min-height: 0;
    padding: 44px 0 46px;
    background: #ebebeb;
}
.slide {
    aspect-ratio: 16 / 9;
    height: 100%;
    background: #fff;
    box-shadow: 0 0 0 2px #d8d8d8, 0 14px 44px rgba(0, 0, 0, 0.14);
}
.notes-handle {
    height: 10px;
    border-top: 2px solid #c6c6c6;
    background: #f7f7f7;
}

/* status bar */
.status {
    display: flex;
    justify-content: space-between;
    align-items: center;
    height: 46px;
    padding: 0 46px 0 48px;
    border-top: 2px solid #9b9b9b;
    background: linear-gradient(#dfdfdf, #c3c3c3);
    font-size: 24px;
    color: #4a4a4a;
}
.info,
.views,
.zoom {
    display: flex;
    align-items: center;
}
.info {
    gap: 42px;
}
.access {
    gap: 6px;
}
.notes,
.comments {
    gap: 8px;
    margin-right: 40px;
}
.comments {
    margin-right: 20px;
}
.view {
    justify-content: center;
    width: 72px;
    height: 46px;
}
.current {
    background: #999;
}
.zoom {
    gap: 12px;
    margin: 0 32px 0 16px;
}
.zoom input {
    appearance: none;
    width: 202px;
    height: 8px;
    margin: 0;
    border-radius: 4px;
    background: #979797;
}
.zoom input::-webkit-slider-thumb {
    appearance: none;
    width: 32px;
    height: 32px;
    border-radius: 50%;
    background: #fff;
    box-shadow: 0 1px 3px rgba(0, 0, 0, 0.4);
}
.percent {
    margin-right: 40px;
}

/* dock */
.dock-area {
    z-index: 1;
    display: flex;
    justify-content: center;
    align-items: flex-start;
    height: 172px;
    background: linear-gradient(to right, #8c2a10 1%, #f23a05 2%, #f23a05 3%, #5a1505 3%, #5a1505 5%, #e0a070 6%, #ecc493 13%, #6e1606 13%, #6e1606 14%, #efcba0 15%, #efcba0 19%, #b5532f 20%, #dd8354 60%, #dd8354 82%, #e9e4d2 82%, #e9e4d2 83%, #bb3c20 83%, #bb3c20 89%, #e4a775 89%, #e4a775 96%, #c23616 96%, #e06a30 99%, #e9b9a2) 1239px 100% / 941px 10px no-repeat;
}
.dock {
    display: flex;
    height: 162px;
    padding: 0 5px;
    border: 2px solid rgba(255, 235, 225, 0.5);
    border-radius: 44px;
    background: linear-gradient(rgba(110, 60, 40, 0.25), rgba(110, 60, 40, 0) 65%), linear-gradient(to right, #fbdccc 30%, #f9a27c 42%, #fea476 50%, #ff9468 58%, #ffa574 68%, #ffa577 80%, #fac7ad 91%, #f8d8c8);
    background-origin: border-box;
}
.app {
    position: relative;
    justify-content: center;
    width: 140px;
    padding-bottom: 10px;
}
.app svg {
    filter: drop-shadow(0 2px 2px rgba(0, 0, 0, 0.25));
}
.app text {
    font-family: "Open Sans", sans-serif;
}
.running::after {
    content: "";
    position: absolute;
    bottom: 2px;
    width: 8px;
    height: 8px;
    border-radius: 50%;
    background: #74361f;
}
.badge {
    position: absolute;
    top: 9px;
    right: 0;
    width: 50px;
    height: 50px;
    border-radius: 50%;
    background: #ff483d;
    box-shadow: 0 1px 3px rgba(0, 0, 0, 0.35);
    font-size: 25px;
    line-height: 50px;
    text-align: center;
    color: #fff;
}
.dot {
    font-size: 16px;
}
.dock-divider {
    width: 2px;
    height: 118px;
    margin: 20px 31px;
    background: rgba(110, 50, 30, 0.45);
}
```
